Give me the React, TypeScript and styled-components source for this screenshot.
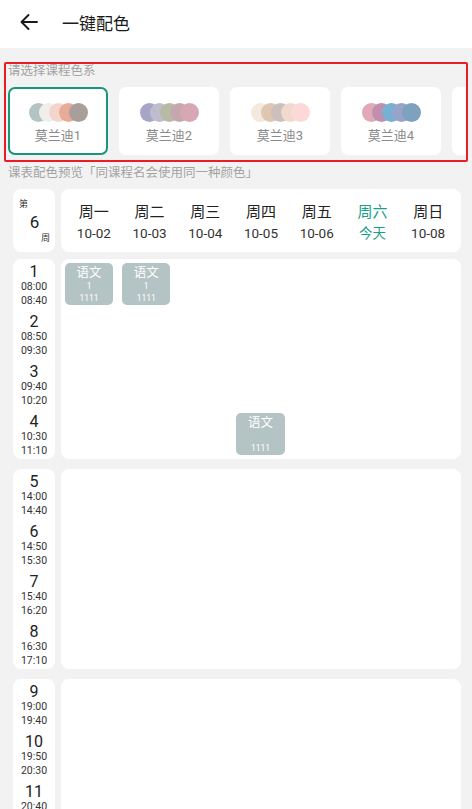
import styled, { createGlobalStyle } from 'styled-components';

const palettes = [
  { name: '莫兰迪1', colors: ['#b3c4c2', '#f1eeee', '#f4d5cd', '#e8ab99', '#a89f9c'] },
  { name: '莫兰迪2', colors: ['#a8a6c8', '#bfbccd', '#b7bba3', '#c4a8ad', '#d8a7b6'] },
  { name: '莫兰迪3', colors: ['#f3e9dc', '#dfc6b0', '#ccc0bd', '#f0d9cd', '#fcd8d6'] },
  { name: '莫兰迪4', colors: ['#e0a9b6', '#c08fae', '#76b0d2', '#97a4c8', '#7ea2be'] },
  { name: '', colors: [] as string[] },
];

const days = [
  { label: '周一', date: '10-02' },
  { label: '周二', date: '10-03' },
  { label: '周三', date: '10-04' },
  { label: '周四', date: '10-05' },
  { label: '周五', date: '10-06' },
  { label: '周六', date: '今天', today: true },
  { label: '周日', date: '10-08' },
];

const sections = [
  {
    periods: [
      ['1', '08:00', '08:40'],
      ['2', '08:50', '09:30'],
      ['3', '09:40', '10:20'],
      ['4', '10:30', '11:10'],
    ],
    courses: [
      { day: 1, period: 1, name: '语文', room: '1', teacher: '1111' },
      { day: 2, period: 1, name: '语文', room: '1', teacher: '1111' },
      { day: 4, period: 4, name: '语文', room: '', teacher: '1111' },
    ],
  },
  {
    periods: [
      ['5', '14:00', '14:40'],
      ['6', '14:50', '15:30'],
      ['7', '15:40', '16:20'],
      ['8', '16:30', '17:10'],
    ],
    courses: [],
  },
  {
    periods: [
      ['9', '19:00', '19:40'],
      ['10', '19:50', '20:30'],
      ['11', '20:40', '21:20'],
      ['12', '21:30', '22:10'],
    ],
    courses: [],
  },
];

export default function App() {
  return (
    <Page>
      <GlobalStyle />
      <Header>
        <BackButton>
          <svg width='20' height='18' viewBox='0 0 20 18' fill='none'>
            <path
              d='M18 9H3M9.5 2L2.5 9l7 7'
              stroke='#1a1a1a'
              strokeWidth='1.9'
              strokeLinecap='round'
              strokeLinejoin='round'
            />
          </svg>
        </BackButton>
        <Title>一键配色</Title>
      </Header>

      <PaletteBox>
        <Hint>请选择课程色系</Hint>
        <CardRow>
          {palettes.map((p, i) => (
            <PaletteCard key={i} $selected={i === 0}>
              {p.colors.length > 0 && (
                <>
                  <Dots>
                    {p.colors.map((c, j) => (
                      <Dot key={j} $color={c} />
                    ))}
                  </Dots>
                  <CardName>{p.name}</CardName>
                </>
              )}
            </PaletteCard>
          ))}
        </CardRow>
      </PaletteBox>

      <Caption>课表配色预览「同课程名会使用同一种颜色」</Caption>

      <Timetable>
        <Row>
          <WeekCell>
            <small>第</small>
            <strong>6</strong>
            <small className='end'>周</small>
          </WeekCell>
          <DayBar>
            {days.map((d) => (
              <DayCol key={d.label} $today={d.today}>
                <span>{d.label}</span>
                <span className='date'>{d.date}</span>
              </DayCol>
            ))}
          </DayBar>
        </Row>

        {sections.map((s, si) => (
          <SectionRow key={si}>
            <PeriodCol>
              {s.periods.map(([n, start, end]) => (
                <Period key={n}>
                  <span className='num'>{n}</span>
                  <span>{start}</span>
                  <span>{end}</span>
                </Period>
              ))}
            </PeriodCol>
            <CourseGrid>
              {s.courses.map((c, ci) => (
                <Course key={ci} $day={c.day} $period={c.period}>
                  <span className='name'>{c.name}</span>
                  <span className='small'>{c.room || '\u00a0'}</span>
                  <span className='small'>{c.teacher}</span>
                </Course>
              ))}
            </CourseGrid>
          </SectionRow>
        ))}
      </Timetable>
    </Page>
  );
}

const GlobalStyle = createGlobalStyle`
  html, body {
    margin: 0;
    padding: 0;
    background: #f2f2f2;
  }
  body {
    font-family: Roboto, "Noto Sans CJK SC", sans-serif;
    color: #222;
  }
`;

const Page = styled.div`
  width: 472px;
  height: 809px;
  overflow: hidden;
  background: #f2f2f2;
`;

const Header = styled.header`
  height: 48px;
  background: #ffffff;
  display: flex;
  align-items: center;
`;

const BackButton = styled.div`
  width: 62px;
  display: flex;
  align-items: center;
  padding-left: 19px;
  box-sizing: border-box;
  margin-top: -5px;
`;

const Title = styled.h1`
  margin: -4px 0 0;
  font-size: 17px;
  font-weight: 400;
  color: #1a1a1a;
`;

const PaletteBox = styled.section`
  margin: 14px 4px 0;
  height: 100px;
  border: 2px solid #ec1c24;
  border-radius: 2px;
  box-sizing: border-box;
  overflow: hidden;
`;

const Hint = styled.div`
  font-size: 12.5px;
  line-height: 14px;
  color: #a3a3a3;
  padding-left: 2px;
`;

const CardRow = styled.div`
  display: flex;
  gap: 11px;
  padding: 9px 0 0 2px;
`;

const PaletteCard = styled.div<{ $selected?: boolean }>`
  flex: 0 0 100px;
  height: 68px;
  box-sizing: border-box;
  background: #ffffff;
  border-radius: 7px;
  border: 2px solid ${(p) => (p.$selected ? '#16977c' : 'transparent')};
  display: flex;
  flex-direction: column;
  align-items: center;
  padding-top: 14px;
`;

const Dots = styled.div`
  display: flex;
  padding-left: 9px;
`;

const Dot = styled.span<{ $color: string }>`
  width: 19px;
  height: 19px;
  border-radius: 50%;
  background: ${(p) => p.$color};
  margin-left: -9px;
`;

const CardName = styled.div`
  margin-top: 6px;
  font-size: 13px;
  line-height: 16px;
  color: #8a8a8a;
`;

const Caption = styled.div`
  padding: 3px 0 0 8px;
  font-size: 12.5px;
  line-height: 16px;
  color: #a3a3a3;
`;

const Timetable = styled.div`
  display: flex;
  flex-direction: column;
  padding: 8px 11px 0 13px;
`;

const Row = styled.div`
  display: flex;
  gap: 6px;
  height: 63px;
  margin-bottom: 7px;
`;

const WeekCell = styled.div`
  width: 42px;
  flex: none;
  background: #ffffff;
  border-radius: 8px;
  display: flex;
  flex-direction: column;
  padding: 10px 5px 0 6px;
  box-sizing: border-box;

  small {
    font-size: 9px;
    line-height: 10px;
    color: #333;
    &.end {
      align-self: flex-end;
    }
  }
  strong {
    font-weight: 400;
    font-size: 17px;
    line-height: 20px;
    text-align: center;
    margin: 3px 0 1px;
    color: #222;
  }
`;

const DayBar = styled.div`
  flex: 1;
  background: #ffffff;
  border-radius: 8px;
  display: grid;
  grid-template-columns: repeat(7, 1fr);
  padding: 13px 5px 0;
`;

const DayCol = styled.div<{ $today?: boolean }>`
  display: flex;
  flex-direction: column;
  align-items: center;
  color: ${(p) => (p.$today ? '#16a085' : '#222')};
  font-size: 15px;
  line-height: 20px;

  .date {
    font-size: 13.5px;
    line-height: 22px;
    color: ${(p) => (p.$today ? '#16a085' : '#333')};
  }
`;

const SectionRow = styled.div`
  display: flex;
  gap: 6px;
  margin-bottom: 10px;
`;

const PeriodCol = styled.div`
  width: 42px;
  flex: none;
  background: #ffffff;
  border-radius: 8px;
  display: grid;
  grid-template-rows: repeat(4, 50px);
`;

const Period = styled.div`
  display: flex;
  flex-direction: column;
  align-items: center;
  padding-top: 4px;
  font-size: 10.5px;
  line-height: 14px;
  color: #333;

  .num {
    font-size: 16px;
    line-height: 17px;
    color: #222;
  }
`;

const CourseGrid = styled.div`
  flex: 1;
  background: #ffffff;
  border-radius: 8px;
  display: grid;
  grid-template-columns: repeat(7, 1fr);
  grid-template-rows: repeat(4, 50px);
`;

const Course = styled.div<{ $day: number; $period: number }>`
  grid-column: ${(p) => p.$day};
  grid-row: ${(p) => p.$period};
  margin: 4px 5px 4px 4px;
  background: #b4c3c3;
  border-radius: 5px;
  display: flex;
  flex-direction: column;
  align-items: center;
  color: #ffffff;
  padding-top: 2px;

  .name {
    font-size: 12.5px;
    line-height: 15px;
  }
  .small {
    font-size: 8.5px;
    line-height: 12px;
  }
`;
